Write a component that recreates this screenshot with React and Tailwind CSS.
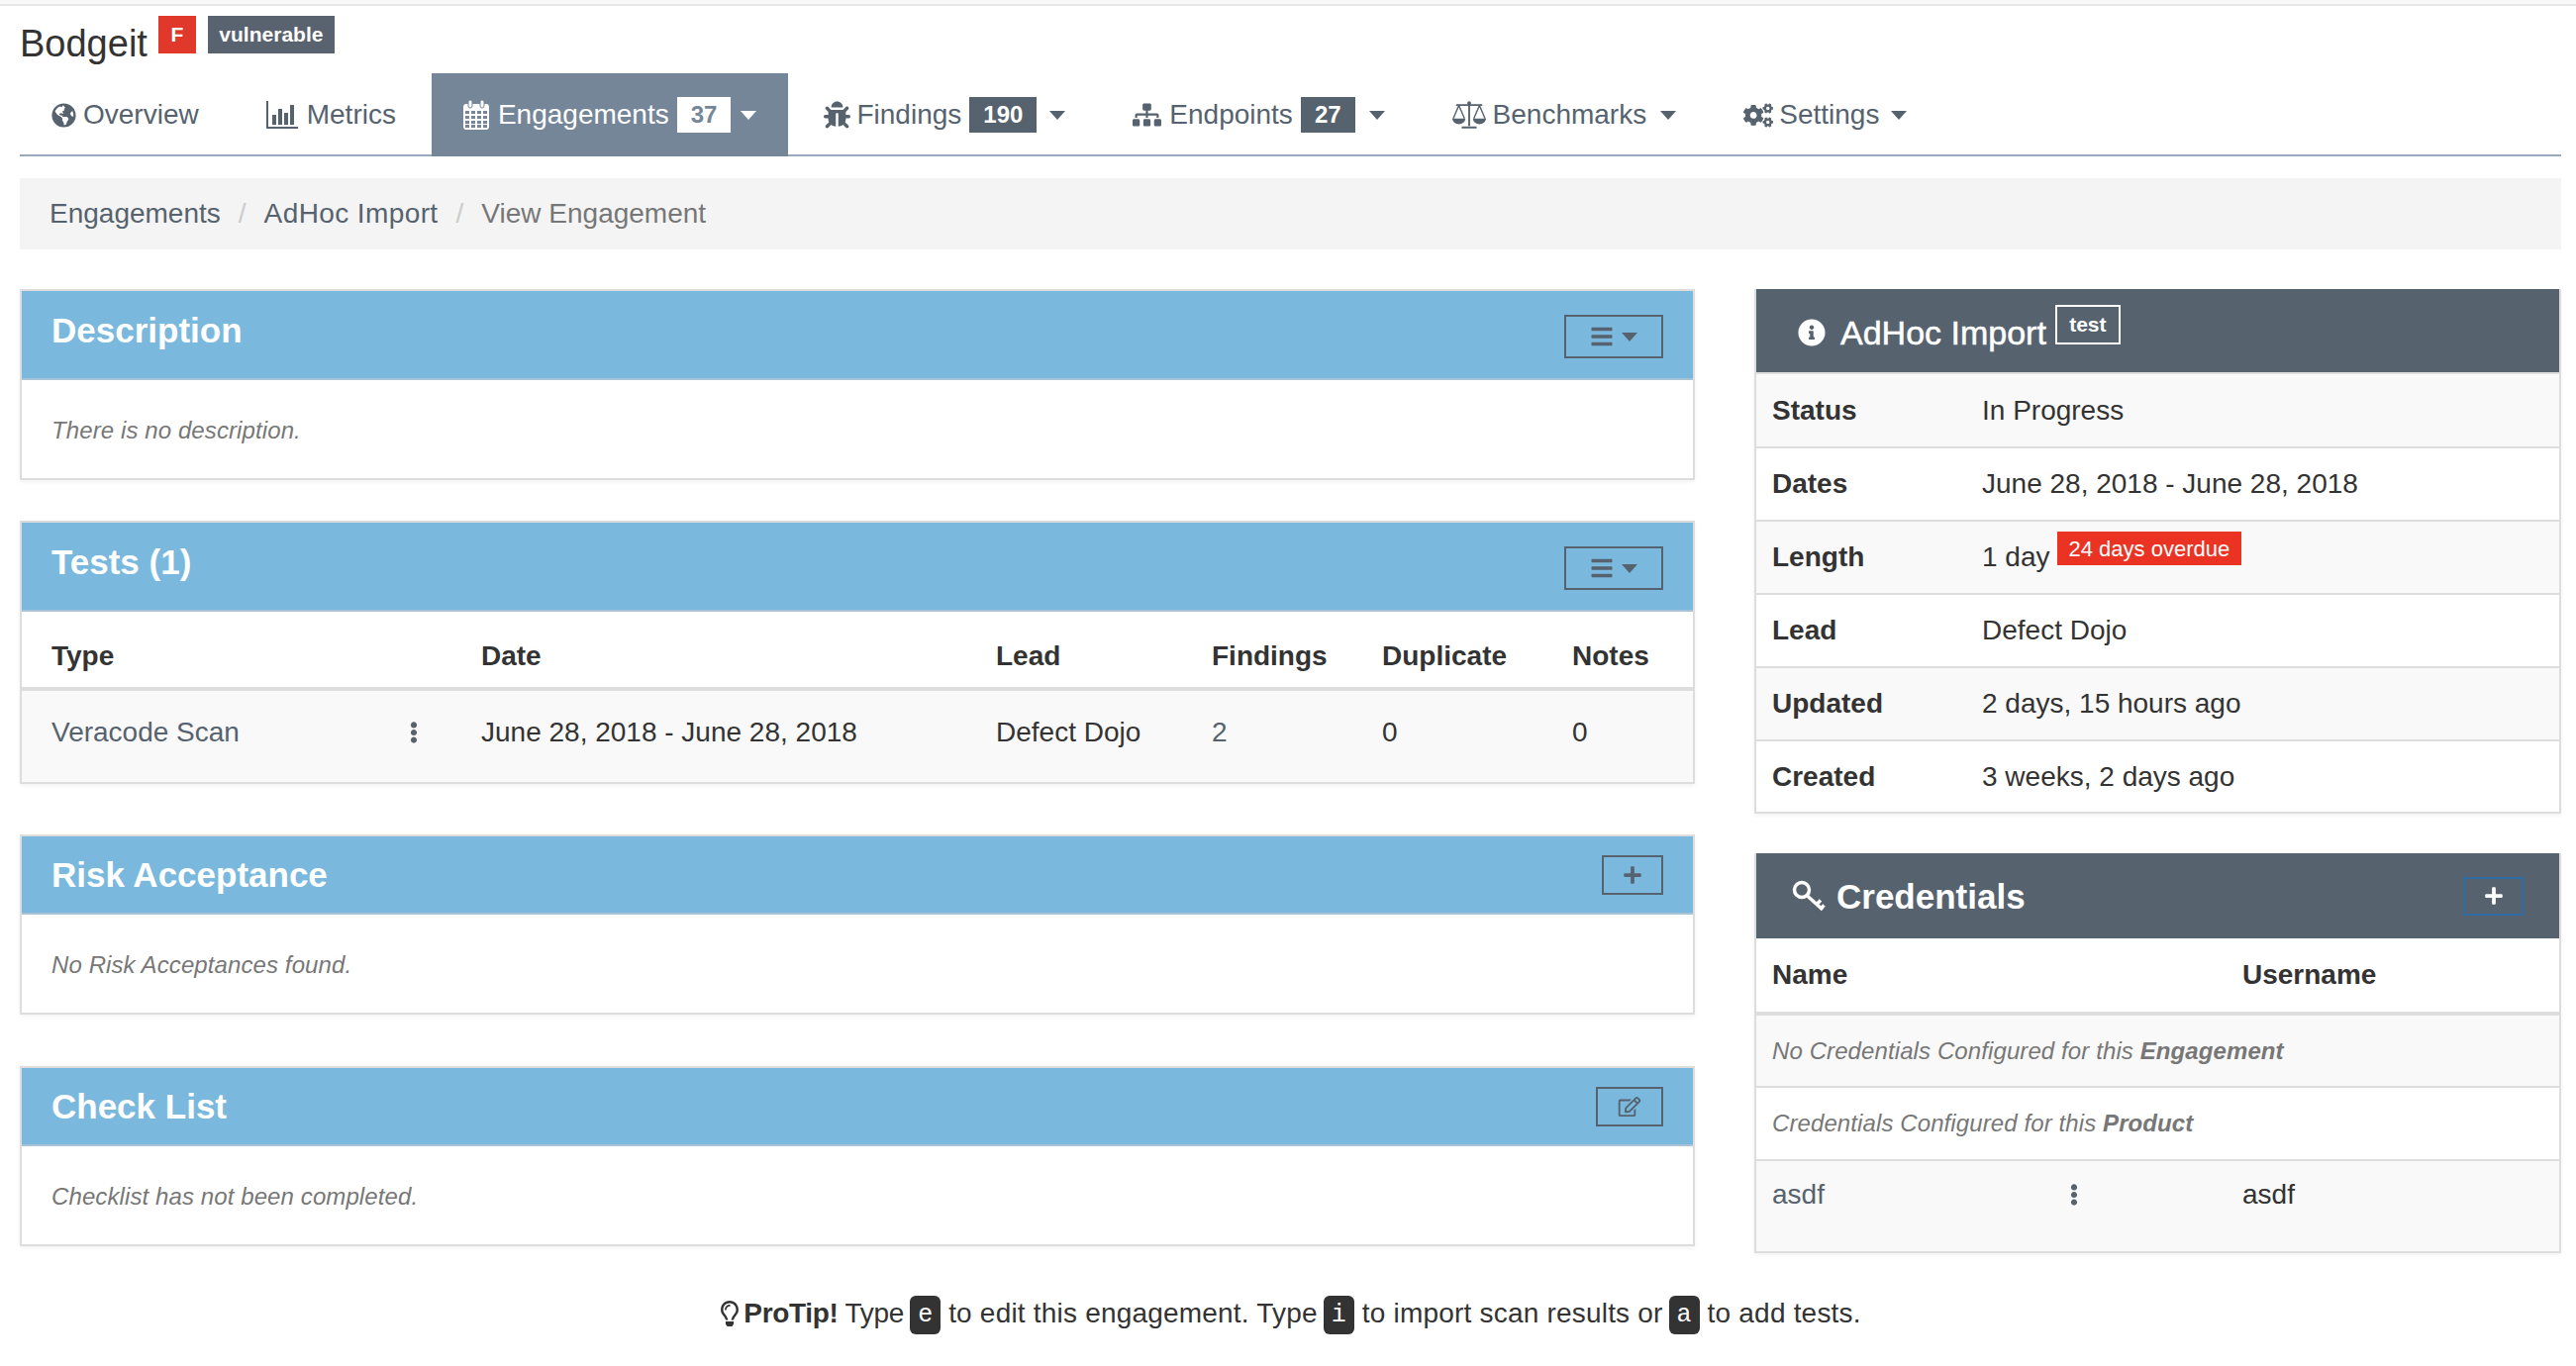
import React from 'react';
import {
  FaGlobeAmericas, FaBug, FaSitemap, FaCogs, FaBars, FaPlus, FaRegEdit,
  FaInfoCircle, FaRegLightbulb, FaEllipsisV,
} from 'react-icons/fa';

const CalendarIcon = () => (
  <svg viewBox="0 0 26 30" className="w-[26px] h-[30px]">
    <rect x="0" y="4" width="26" height="26" rx="3" fill="#fff" />
    <rect x="5" y="0" width="4" height="8" rx="2" fill="#fff" stroke="#758699" />
    <rect x="17" y="0" width="4" height="8" rx="2" fill="#fff" stroke="#758699" />
    {[11, 16, 21, 25].map((y) =>
      [2, 8, 14, 20].map((x) => (
        <rect key={`${x}-${y}`} x={x} y={y} width="4" height="3" fill="#758699" />
      ))
    )}
  </svg>
);

const MetricsIcon = () => (
  <svg viewBox="0 0 32 28" className="w-[32px] h-[28px]" fill="#56636f">
    <rect x="0" y="0" width="2" height="28" />
    <rect x="0" y="26" width="32" height="2" />
    <rect x="6" y="14" width="4" height="10" />
    <rect x="12" y="8" width="4" height="16" />
    <rect x="18" y="12" width="4" height="12" />
    <rect x="24" y="4" width="4" height="20" />
  </svg>
);

const ScaleIcon = () => (
  <svg viewBox="0 0 36 30" className="w-[34px] h-[30px]" fill="none" stroke="#56636f" strokeWidth="1.5">
    <path d="M18 3v24M10 28.500h16M4 4.500h28" strokeWidth="2" />
    <circle cx="18" cy="2.500" r="2" fill="#56636f" stroke="none" />
    <path d="M7 5L1 19M7 5l6 14M29 5l-6 14M29 5l6 14" />
    <path d="M0 19h14a7 6 0 0 1-14 0zM22 19h14a7 6 0 0 1-14 0z" fill="#56636f" stroke="none" />
  </svg>
);

const KeyIcon = () => (
  <svg viewBox="0 0 34 32" className="w-[34px] h-[32px]" fill="none" stroke="#fff" strokeWidth="3.500">
    <circle cx="10" cy="10" r="7.500" />
    <path d="M15 15.500L31 30M25 24.500l4-4M29.500 28.500l3-3" />
  </svg>
);

const Caret = ({ white }) => (
  <span
    className={
      white
        ? 'inline-block w-0 h-0 border-x-[8px] border-t-[9px] border-x-transparent border-t-white'
        : 'inline-block w-0 h-0 border-x-[8px] border-t-[9px] border-x-transparent border-t-[#56636f]'
    }
  />
);

const NavItem = ({ icon, gap, label, badge, caretGap, active }) => (
  <div
    className={
      active
        ? 'h-[84px] px-8 mr-1 flex items-center bg-[#758699] text-white'
        : 'h-[84px] px-8 mr-1 flex items-center text-[#56636f]'
    }
  >
    <span className={`flex items-center ${gap}`}>{icon}</span>
    <span>{label}</span>
    {badge && (
      <span
        className={
          active
            ? 'ml-2 h-9 px-[14px] flex items-center text-[24px] font-bold bg-white text-[#758699]'
            : 'ml-2 h-9 px-[14px] flex items-center text-[24px] font-bold bg-[#56636f] text-white'
        }
      >
        {badge}
      </span>
    )}
    {caretGap && <span className={`flex items-center ${caretGap}`}><Caret white={active} /></span>}
  </div>
);

const HeadButton = ({ className, children }) => (
  <div className={`flex items-center justify-center border-2 border-[#56636f] text-[#56636f] ${className}`}>
    {children}
  </div>
);

const BluePanel = ({ title, button, headClass, titleClass, className, children }) => (
  <div className={`border-2 border-[#ddd] bg-white shadow-[0_2px_4px_rgba(0,0,0,0.05)] ${className}`}>
    <div className={`bg-[#7ab9dd] border-b-2 border-[#a9c3d6] pl-[30px] pr-[30px] flex justify-between items-center ${headClass}`}>
      <h3 className={`text-[35px] font-bold text-white leading-10 ${titleClass}`}>{title}</h3>
      {button}
    </div>
    {children}
  </div>
);

const NoteBody = ({ children }) => (
  <div className="h-[99px] pl-[30px] pt-[3px] flex items-center text-[24px] tracking-[0.1px] italic text-[#777]">{children}</div>
);

const MenuButton = () => (
  <HeadButton className="w-[100px] h-[44px] gap-2 mt-1">
    <FaBars className="w-[24px] h-[24px]" />
    <Caret />
  </HeadButton>
);

const InfoRow = ({ label, odd, children }) => (
  <tr className={odd ? 'bg-[#f9f9f9] border-b-2 border-[#ddd]' : 'bg-white border-b-2 border-[#ddd]'}>
    <td className="h-[74px] pl-4 w-[228px] font-bold">{label}</td>
    <td className="h-[74px]">{children}</td>
  </tr>
);

const Kbd = ({ children }) => (
  <kbd className="inline-block h-[39px] leading-[39px] px-2 ml-[6px] mr-2 rounded-md bg-[#333] text-white text-[25px] tracking-normal align-middle font-['Liberation_Mono',monospace]">
    {children}
  </kbd>
);

function App() {
  return (
    <div className="min-h-[1380px] bg-white text-[28px] text-[#333] font-['Liberation_Sans',Arial,sans-serif]">
      <div className="h-[6px] bg-[#f8f8f8] border-b-2 border-[#e7e7e7]" />

      <div className="pl-5 pr-[15px]">
        <div className="h-[68px] flex items-start">
          <span className="text-[38px] leading-[44px] mt-4">Bodgeit</span>
          <span className="ml-[11px] mt-[10px] h-[38px] w-[38px] flex items-center justify-center bg-[#e0392b] text-white text-[21px] font-bold">F</span>
          <span className="ml-3 mt-[10px] h-[38px] w-[128px] flex items-center justify-center bg-[#59636f] text-white text-[21px] font-bold">vulnerable</span>
        </div>

        <nav className="flex h-[84px] border-b-2 border-[#97a9bb]">
          <NavItem gap="mr-[7px]" icon={<FaGlobeAmericas className="w-[25px] h-[25px]" />} label="Overview" />
          <NavItem gap="mr-[9px]" icon={<MetricsIcon />} label="Metrics" />
          <NavItem gap="mr-[9px]" active icon={<CalendarIcon />} label="Engagements" badge="37" caretGap="ml-[10px]" />
          <NavItem gap="mr-[6px]" icon={<FaBug className="w-[27px] h-[28px]" />} label="Findings" badge="190" caretGap="ml-[13px]" />
          <NavItem gap="mr-[8px]" icon={<FaSitemap className="w-[29px] h-[28px]" />} label="Endpoints" badge="27" caretGap="ml-[14px]" />
          <NavItem gap="mr-[7px]" icon={<ScaleIcon />} label="Benchmarks" caretGap="ml-[14px]" />
          <NavItem gap="mr-[6px]" icon={<FaCogs className="w-[30px] h-[27px]" />} label="Settings" caretGap="ml-[12px]" />
        </nav>

        <div className="mt-[22px] h-[72px] bg-[#f4f4f4] pl-[30px] flex items-center">
          <span className="text-[#56636f]">Engagements</span>
          <span className="px-[18px] text-[#ccc]">/</span>
          <span className="text-[#56636f] tracking-[0.4px]">AdHoc Import</span>
          <span className="px-[18px] text-[#ccc]">/</span>
          <span className="text-[#777]">View Engagement</span>
        </div>

        <div className="mt-10 flex items-start gap-[60px]">
          <div className="w-[1692px]">
            <BluePanel title="Description" headClass="h-[90px]" titleClass="-mt-2" className="mb-[41px]" button={<MenuButton />}>
              <NoteBody>There is no description.</NoteBody>
            </BluePanel>

            <BluePanel title="Tests (1)" headClass="h-[90px]" titleClass="-mt-2" className="mb-[51px]" button={<MenuButton />}>
              <table className="w-full table-fixed">
                <thead>
                  <tr className="border-b-4 border-[#ddd] text-left">
                    <th className="h-[78px] pt-[14px] pl-[30px] w-[464px]">Type</th>
                    <th className="h-[78px] pt-[14px] w-[520px]">Date</th>
                    <th className="h-[78px] pt-[14px] w-[218px]">Lead</th>
                    <th className="h-[78px] pt-[14px] w-[172px]">Findings</th>
                    <th className="h-[78px] pt-[14px] w-[192px]">Duplicate</th>
                    <th className="h-[78px] pt-[14px]">Notes</th>
                  </tr>
                </thead>
                <tbody>
                  <tr className="bg-[#f9f9f9]">
                    <td className="h-[94px] pl-[30px] pb-2">
                      <div className="flex items-center pr-[58px] justify-between text-[#56636f]">
                        <span>Veracode Scan</span>
                        <FaEllipsisV className="w-[20px] h-[22px]" />
                      </div>
                    </td>
                    <td className="pb-2">June 28, 2018 - June 28, 2018</td>
                    <td className="pb-2">Defect Dojo</td>
                    <td className="pb-2 text-[#56636f]">2</td>
                    <td className="pb-2">0</td>
                    <td className="pb-2">0</td>
                  </tr>
                </tbody>
              </table>
            </BluePanel>

            <BluePanel
              title="Risk Acceptance"
              headClass="h-[79px]"
              className="mb-[52px]"
              button={
                <HeadButton className="w-[62px] h-[40px]">
                  <FaPlus className="w-[20px] h-[20px]" />
                </HeadButton>
              }
            >
              <NoteBody>No Risk Acceptances found.</NoteBody>
            </BluePanel>

            <BluePanel
              title="Check List"
              headClass="h-[79px]"
              button={
                <HeadButton className="w-[68px] h-[40px]">
                  <FaRegEdit className="w-[24px] h-[20px]" />
                </HeadButton>
              }
            >
              <NoteBody>Checklist has not been completed.</NoteBody>
            </BluePanel>
          </div>

          <div className="w-[815px]">
            <div className="border-2 border-t-0 border-[#ddd] bg-white shadow-[0_2px_4px_rgba(0,0,0,0.05)] mb-10">
              <div className="h-[84px] bg-[#56636f] border-b-2 border-[#56636f] pl-[42px] flex items-start text-white">
                <FaInfoCircle className="w-[28px] h-[28px] mt-[30px] mr-[15px]" />
                <span className="text-[34px] leading-[40px] mt-6 [-webkit-text-stroke:0.5px_white]">AdHoc Import</span>
                <span className="ml-[9px] mt-4 h-10 w-[66px] border-2 border-white flex items-center justify-center text-[21px] font-bold">test</span>
              </div>
              <div className="h-[2px] bg-[#ddd]" />
              <table className="w-full">
                <tbody>
                  <InfoRow label="Status" odd>In Progress</InfoRow>
                  <InfoRow label="Dates">June 28, 2018 - June 28, 2018</InfoRow>
                  <InfoRow label="Length" odd>
                    <span className="inline-flex items-start">
                      1 day
                      <span className="ml-[7px] -mt-[5px] h-[34px] px-3 flex items-center bg-[#ea3323] text-white text-[22px]">24 days overdue</span>
                    </span>
                  </InfoRow>
                  <InfoRow label="Lead">Defect Dojo</InfoRow>
                  <InfoRow label="Updated" odd>2 days, 15 hours ago</InfoRow>
                  <tr className="bg-white">
                    <td className="h-[72px] pl-4 font-bold">Created</td>
                    <td className="h-[72px]">3 weeks, 2 days ago</td>
                  </tr>
                </tbody>
              </table>
            </div>

            <div className="border-2 border-t-0 border-[#ddd] bg-white shadow-[0_2px_4px_rgba(0,0,0,0.05)]">
              <div className="h-[86px] bg-[#56636f] pl-9 pr-9 flex items-center justify-between text-white">
                <div className="flex items-center">
                  <KeyIcon />
                  <span className="ml-[11px] mt-[2px] text-[35px] font-bold">Credentials</span>
                </div>
                <div className="w-[61px] h-[39px] border-2 border-[#2e6da4] flex items-center justify-center">
                  <FaPlus className="w-[20px] h-[20px]" />
                </div>
              </div>
              <table className="w-full table-fixed">
                <thead>
                  <tr className="border-b-4 border-[#ddd] text-left">
                    <th className="h-[76px] pl-4 w-[491px]">Name</th>
                    <th className="h-[76px]">Username</th>
                  </tr>
                </thead>
                <tbody>
                  <tr className="bg-[#f9f9f9] border-b-2 border-[#ddd]">
                    <td colSpan={2} className="h-[74px] pl-4 text-[24px] tracking-[0.1px] italic text-[#777]">
                      No Credentials Configured for this <b>Engagement</b>
                    </td>
                  </tr>
                  <tr className="bg-white border-b-2 border-[#ddd]">
                    <td colSpan={2} className="h-[74px] pl-4 text-[24px] tracking-[0.1px] italic text-[#777]">
                      Credentials Configured for this <b>Product</b>
                    </td>
                  </tr>
                  <tr className="bg-[#f9f9f9]">
                    <td className="h-[92px] pl-4 pb-6">
                      <div className="flex items-center justify-between pr-[160px] text-[#56636f]">
                        <span>asdf</span>
                        <FaEllipsisV className="w-[20px] h-[22px]" />
                      </div>
                    </td>
                    <td className="h-[92px] pb-6">asdf</td>
                  </tr>
                </tbody>
              </table>
            </div>
          </div>
        </div>

        <div className="mt-[40px] flex justify-center items-center tracking-[0.2px]">
          <FaRegLightbulb className="w-[20px] h-[26px] text-[#333] mr-1" />
          <span>
            <span className="tracking-[-0.3px]"><b>ProTip!</b> Type</span>
            <Kbd>e</Kbd>to edit this engagement. Type<Kbd>i</Kbd>to import scan results or<Kbd>a</Kbd>to add tests.
          </span>
        </div>
      </div>
    </div>
  );
}

export default App;
